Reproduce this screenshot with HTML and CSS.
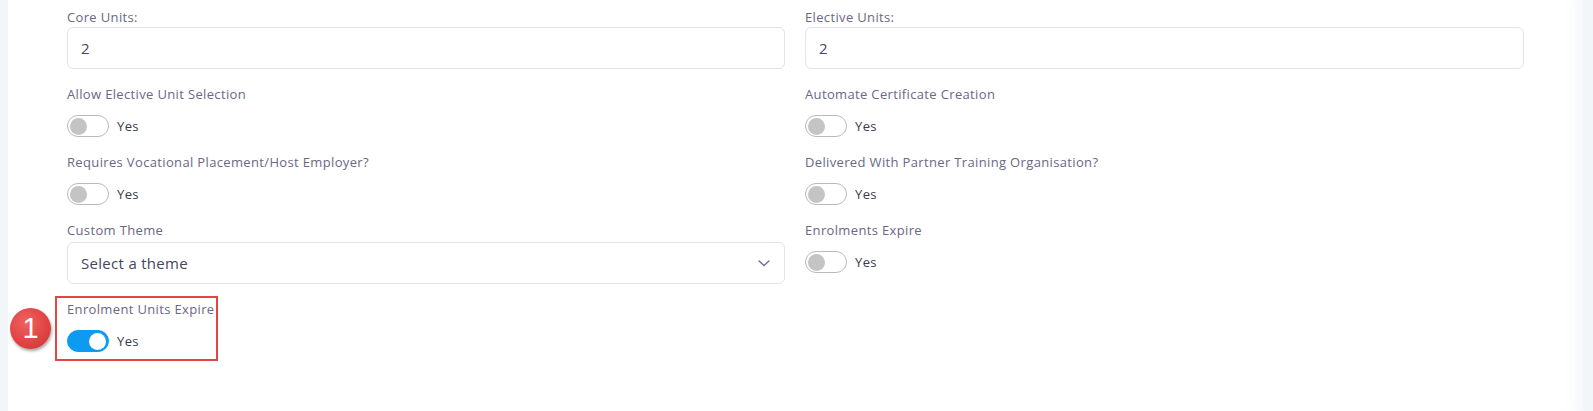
FILE: index.html
```html
<!DOCTYPE html>
<html>
<head>
<meta charset="utf-8">
<link rel="stylesheet" href="styles.css">
</head>
<body>
<div class="page">
  <div class="panel">
    <div class="form-grid">
      <div class="field">
        <div class="label">Core Units:</div>
        <div class="input">2</div>
      </div>
      <div class="field">
        <div class="label">Elective Units:</div>
        <div class="input">2</div>
      </div>

      <div class="field">
        <div class="label">Allow Elective Unit Selection</div>
        <div class="switch-row"><span class="switch"><span class="knob"></span></span><span class="switch-text">Yes</span></div>
      </div>
      <div class="field">
        <div class="label">Automate Certificate Creation</div>
        <div class="switch-row"><span class="switch"><span class="knob"></span></span><span class="switch-text">Yes</span></div>
      </div>

      <div class="field">
        <div class="label">Requires Vocational Placement/Host Employer?</div>
        <div class="switch-row"><span class="switch"><span class="knob"></span></span><span class="switch-text">Yes</span></div>
      </div>
      <div class="field">
        <div class="label">Delivered With Partner Training Organisation?</div>
        <div class="switch-row"><span class="switch"><span class="knob"></span></span><span class="switch-text">Yes</span></div>
      </div>

      <div class="field">
        <div class="label label-select">Custom Theme</div>
        <div class="input select">
          <span>Select a theme</span>
          <svg class="chevron" width="12" height="7" viewBox="0 0 12 7"><path d="M1 1 L6 5.5 L11 1" fill="none" stroke="#6e6e8a" stroke-width="1.4" stroke-linecap="round" stroke-linejoin="round"/></svg>
        </div>
      </div>
      <div class="field">
        <div class="label">Enrolments Expire</div>
        <div class="switch-row"><span class="switch"><span class="knob"></span></span><span class="switch-text">Yes</span></div>
      </div>

      <div class="field highlighted">
        <div class="label">Enrolment Units Expire</div>
        <div class="switch-row"><span class="switch on"><span class="knob"></span></span><span class="switch-text">Yes</span></div>
        <div class="highlight-box"></div>
        <div class="badge">1</div>
      </div>
    </div>
  </div>
</div>
</body>
</html>
```

FILE: styles.css
```css
* { box-sizing: border-box; }
html, body {
  margin: 0;
  padding: 0;
}
body {
  background: #f3f6f9;
  font-family: "Open Sans", "Liberation Sans", sans-serif;
  width: 1593px;
  height: 411px;
  overflow: hidden;
}
.page {
  padding-left: 8px;
  padding-right: 10px;
  height: 411px;
}
.panel {
  background: #ffffff;
  height: 411px;
  padding: 7px 0 0 59px;
  box-shadow: inset -20px 0 20px -20px rgba(200, 210, 225, 0.35);
}
.form-grid {
  display: grid;
  grid-template-columns: 718px 719px;
  column-gap: 20px;
  row-gap: 15px;
  align-items: start;
}
.field {
  position: relative;
}
.field.highlighted {
  justify-self: start;
}
.label {
  font-size: 13px;
  line-height: 20px;
  color: #6a6884;
  letter-spacing: 0.35px;
  white-space: nowrap;
}
.label-select {
  margin-bottom: 2px;
}
.input {
  height: 42px;
  border: 1px solid #e3e2ec;
  border-radius: 6px;
  padding: 0 13px;
  display: flex;
  align-items: center;
  font-size: 15px;
  font-weight: 500;
  color: #45455e;
  letter-spacing: 0.3px;
}
.select {
  justify-content: space-between;
  padding-right: 14px;
}
.chevron {
  display: block;
}
.switch-row {
  display: flex;
  align-items: center;
  gap: 8px;
  margin-top: 11px;
}
.switch {
  width: 42px;
  height: 22px;
  border-radius: 11px;
  border: 1px solid #b8b8c2;
  background: #ffffff;
  display: flex;
  align-items: center;
  padding: 0 2px;
}
.knob {
  width: 17px;
  height: 17px;
  border-radius: 50%;
  background: #c4c4c4;
}
.switch.on {
  background: #0d9bf2;
  border-color: #0d9bf2;
  justify-content: flex-end;
}
.switch.on .knob {
  background: #ffffff;
}
.switch-text {
  font-size: 13px;
  color: #3a3a4e;
  line-height: 20px;
  letter-spacing: 0.4px;
}
.highlight-box {
  position: absolute;
  left: -12px;
  top: -3px;
  right: -4px;
  height: 65px;
  border: 2px solid #e44444;
  pointer-events: none;
}
.badge {
  position: absolute;
  left: -57px;
  top: 9px;
  width: 41px;
  height: 41px;
  border-radius: 50%;
  background: radial-gradient(circle at 40% 35%, #f06262 0%, #e04444 55%, #c93434 100%);
  box-shadow: 1px 2px 3px rgba(0, 0, 0, 0.35);
  color: #ffffff;
  font-family: "Liberation Sans", Arial, sans-serif;
  font-size: 29px;
  line-height: 41px;
  text-align: center;
}
```
